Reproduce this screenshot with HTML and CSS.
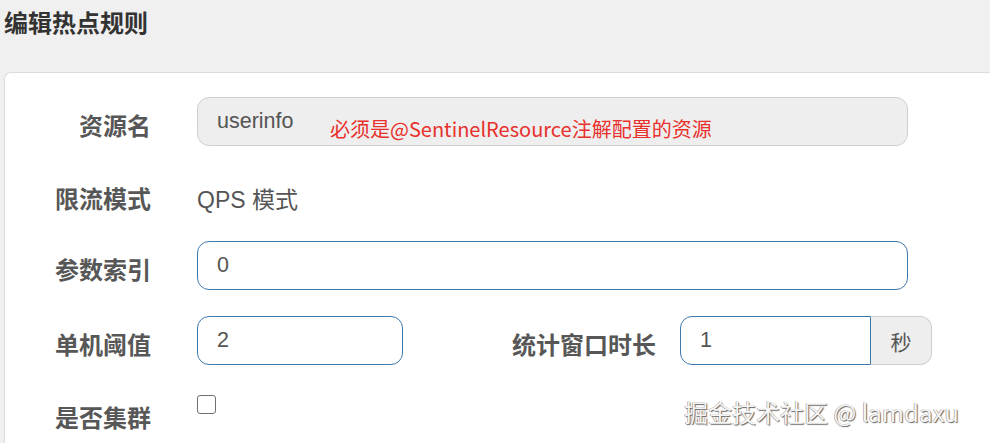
FILE: index.html
```html
<!DOCTYPE html>
<html lang="zh-CN">
<head>
<meta charset="utf-8">
<title>编辑热点规则</title>
<link rel="stylesheet" href="styles.css">
</head>
<body>
<div class="page">
  <header class="header">
    <h1 class="title">编辑热点规则</h1>
  </header>
  <section class="panel">
    <form class="form">
      <div class="row">
        <label class="label">资源名</label>
        <div class="control wide">
          <div class="input readonly">userinfo</div>
          <span class="hint">必须是@SentinelResource注解配置的资源</span>
        </div>
      </div>
      <div class="row">
        <label class="label">限流模式</label>
        <div class="control">
          <span class="static">QPS 模式</span>
        </div>
      </div>
      <div class="row row-3">
        <label class="label">参数索引</label>
        <div class="control wide">
          <div class="input active">0</div>
        </div>
      </div>
      <div class="row">
        <label class="label">单机阈值</label>
        <div class="control narrow">
          <div class="input active">2</div>
        </div>
        <label class="label label-second">统计窗口时长</label>
        <div class="group">
          <div class="input active group-input">1</div>
          <span class="addon">秒</span>
        </div>
      </div>
      <div class="row row-check">
        <label class="label">是否集群</label>
        <div class="control">
          <input class="checkbox" type="checkbox">
        </div>
      </div>
    </form>
  </section>
  <div class="watermark">掘金技术社区 @ lamdaxu</div>
</div>
</body>
</html>
```

FILE: styles.css
```css
html, body {
  margin: 0;
  padding: 0;
  background: #f0f0f0;
  width: 990px;
  height: 443px;
  overflow: hidden;
}

.page {
  position: relative;
  width: 990px;
  height: 443px;
  font-family: "Liberation Sans", "Noto Sans CJK SC", sans-serif;
}

.header {
  height: 72px;
  padding-left: 4px;
  box-sizing: border-box;
}

.title {
  margin: 0;
  padding-top: 6px;
  font-family: "Noto Sans CJK SC", sans-serif;
  font-size: 24px;
  line-height: 32px;
  font-weight: 700;
  color: #333;
}

.panel {
  margin-left: 4px;
  background: #fff;
  border-top: 1px solid #dcdcdc;
  border-left: 1px solid #dcdcdc;
  border-top-left-radius: 7px;
  height: 380px;
  box-sizing: border-box;
  padding-top: 24px;
}

.form {
  display: flex;
  flex-direction: column;
  gap: 24px;
}

.row {
  display: flex;
  align-items: flex-start;
  height: 49px;
}

.row-3 {
  margin-top: -2px;
  margin-bottom: 2px;
}

.label {
  width: 146px;
  flex: none;
  height: 49px;
  padding-top: 6px;
  box-sizing: border-box;
  display: flex;
  align-items: center;
  justify-content: flex-end;
  font-family: "Noto Sans CJK SC", sans-serif;
  font-weight: 700;
  font-size: 24px;
  color: #575757;
}

.control {
  margin-left: 46px;
  position: relative;
  height: 49px;
  display: flex;
  align-items: center;
}

.wide {
  width: 711px;
}

.narrow {
  width: 206px;
}

.input {
  width: 100%;
  height: 49px;
  box-sizing: border-box;
  border-radius: 12px;
  padding: 0 19px;
  display: flex;
  align-items: center;
  font-size: 21.5px;
  color: #555;
}

.readonly {
  background: #eeeeee;
  border: 1px solid #cfcfcf;
}

.active {
  background: #fff;
  border: 1px solid #3f78ad;
}

.hint {
  position: absolute;
  left: 133px;
  top: 18px;
  font-family: "Noto Sans CJK SC", sans-serif;
  font-size: 20px;
  line-height: 28px;
  color: #e8302c;
}

.static {
  padding-top: 6px;
  font-size: 23px;
  color: #555;
}

.label-second {
  width: 253px;
}

.group {
  margin-left: 24px;
  display: flex;
  width: 252px;
  height: 49px;
}

.group-input {
  width: 191px;
  flex: none;
  border-top-right-radius: 0;
  border-bottom-right-radius: 0;
}

.addon {
  flex: 1;
  height: 49px;
  box-sizing: border-box;
  background: #eeeeee;
  border: 1px solid #cfcfcf;
  border-left: none;
  border-radius: 0 12px 12px 0;
  display: flex;
  align-items: center;
  justify-content: center;
  font-family: "Noto Sans CJK SC", sans-serif;
  font-size: 21px;
  color: #555;
}

.row-check .control {
  align-items: flex-start;
  padding-top: 6px;
  box-sizing: border-box;
}

.checkbox {
  appearance: none;
  -webkit-appearance: none;
  margin: 0;
  width: 19px;
  height: 19px;
  border: 1px solid #707070;
  border-radius: 3px;
  background: #fff;
}

.watermark {
  position: absolute;
  left: 684px;
  top: 396px;
  font-family: "Noto Sans CJK SC", sans-serif;
  font-size: 24px;
  line-height: 32px;
  color: #f6f6f6;
  text-shadow: 1px 1px 1px #666, -0.5px -0.5px 0.5px #888;
  white-space: nowrap;
}
```
